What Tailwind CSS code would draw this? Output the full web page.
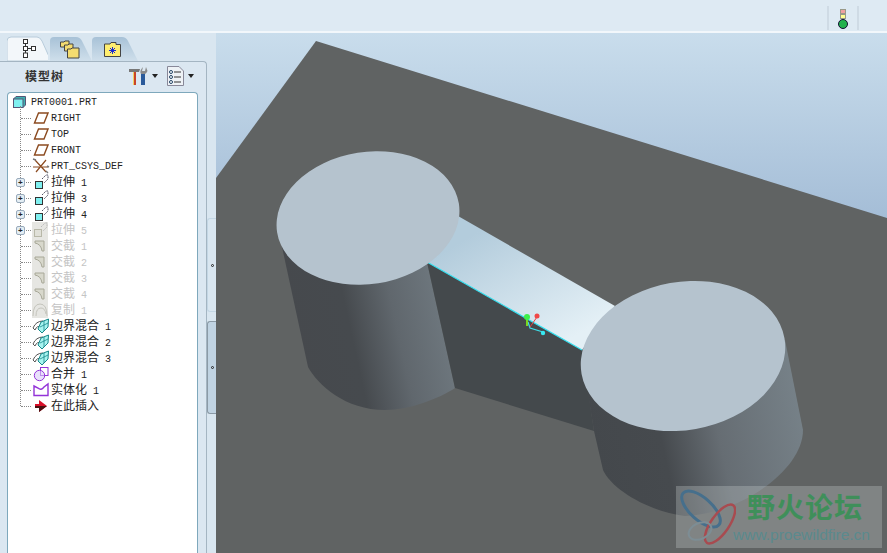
<!DOCTYPE html>
<html lang="zh">
<head>
  <meta charset="UTF-8">
  <title>PRT0001</title>
  <script src="https://cdn.jsdelivr.net/npm/@tailwindcss/browser@4"></script>
</head>
<body class="bg-[#dce8f2]">
  <svg width="0" height="0" class="absolute">
    <defs>
      <linearGradient id="tabfill" x1="0" y1="0" x2="0" y2="1"><stop offset="0" stop-color="#a8c2d7"/><stop offset="1" stop-color="#cfdfeb"/></linearGradient>
      <symbol id="plane" viewBox="0 0 16 16"><path d="M1.5 13 L5.5 3 H15 L11 13 Z" fill="none" stroke="#8c4b20" stroke-width="1.4"/></symbol>
      <symbol id="csys" viewBox="0 0 18 16"><path d="M3 2 L14 14 M14 2 L4 14 M1 9 H16" stroke="#8c4b20" stroke-width="1.2" fill="none"/><path d="M1 1 L4 2 M15 8 L17 9 M14 13 L16 15" stroke="#777" stroke-width="1.4"/></symbol>
      <symbol id="extrude" viewBox="0 0 16 16"><path d="M9 5 L13 1 H15 V5 L11 9" fill="none" stroke="#556" stroke-width="1" stroke-dasharray="2 1"/><rect x="2.5" y="7.5" width="7" height="7" fill="#7ff0f0" stroke="#333"/></symbol>
      <symbol id="extrudeoff" viewBox="0 0 16 16"><path d="M9 5 L13 1 H15 V5 L11 9" fill="none" stroke="#bbb" stroke-width="1" stroke-dasharray="2 1"/><rect x="2.5" y="7.5" width="7" height="7" fill="#e0e0d8" stroke="#b8b8a8"/></symbol>
      <symbol id="trim" viewBox="0 0 16 16"><path d="M3 3 H12 V13 H10 Q9 6 3 5 Z" fill="#d8d8cc" stroke="#a8a898"/></symbol>
      <symbol id="copy" viewBox="0 0 16 16"><path d="M1 14 Q1 2 8 2 Q15 2 15 14" fill="none" stroke="#c4c4bc"/><path d="M4 14 Q4 6 9 6 Q13 6 14 12" fill="none" stroke="#c4c4bc"/></symbol>
      <symbol id="blend" viewBox="0 0 18 16"><path d="M1 10 Q4 3 11 3 L9 9 Q5 7 3 12 Z" fill="#fff" stroke="#555"/><path d="M9 4 L16.5 1 L16 9 L10 15 L6 11 Z" fill="#a8f4f0" stroke="#16888a"/><path d="M12 3 L12 13 M16 5 L8 9" stroke="#16888a" stroke-width=".8"/></symbol>
      <symbol id="merge" viewBox="0 0 16 16"><rect x="7.5" y="1.5" width="7.5" height="8" fill="#fff" stroke="#9333d8"/><circle cx="6.5" cy="9.5" r="5.2" fill="#d8ccf8" fill-opacity=".6" stroke="#9333d8"/></symbol>
      <symbol id="solid" viewBox="0 0 16 16"><path d="M1 4 L5 6 Q8 9 11 5 L15 2 V13.5 H1 Z" fill="#fff" stroke="#9333d8" stroke-width="1.4"/></symbol>
      <symbol id="insert" viewBox="0 0 16 16"><path d="M6 2 L14 8 L6 14 V10 H2 V6 H6 Z" fill="#d8102a"/><path d="M6 14 L14 8 H2 V10 H6 Z" fill="#4a1010"/></symbol>
    </defs>
  </svg>

  <div class="w-[887px] h-[553px] flex flex-col overflow-hidden">
    <!-- top bar -->
    <div class="h-[33px] shrink-0 flex justify-end bg-[#deeaf3] border-b-2 border-[#f2f7fb] shadow-[0_1px_0_#c3d6e5]">
      <div class="mt-[6px] mr-[28px] w-[32px] h-[24px] flex flex-col items-center border-x-2 border-[#cfdbe5]">
        <div class="mt-[3px] w-[6px] h-[5px] bg-[#f0a0a0] border border-[#998]"></div>
        <div class="w-[6px] h-[5px] bg-[#ffff90] border border-[#998]"></div>
        <div class="w-[10px] h-[10px] rounded-full bg-[#22b14c] border border-[#113]"></div>
      </div>
    </div>

    <div class="flex-1 flex min-h-0">
      <!-- left panel -->
      <div class="w-[216px] shrink-0 relative flex flex-col bg-[#d9e6f0] font-['Liberation_Mono','Noto_Sans_CJK_SC',monospace] text-[10px] text-[#222]">
        <!-- tabs -->
        <div class="h-[28px] shrink-0 flex items-end pl-[7px] gap-[2px]">
          <div class="relative w-[41px] h-[25px] flex items-center pl-[16px]">
            <svg class="absolute inset-0" width="41" height="25"><path d="M0 25 V5 Q0 1 4 1 H30 Q33 1 35 5 L44 25 Z" fill="#f3f7fa" stroke="#b8ccdb"/></svg>
            <svg class="relative" width="13" height="19" viewBox="0 0 13 19"><g fill="#fff" stroke="#333"><rect x=".5" y=".5" width="4" height="4"/><rect x=".5" y="7.5" width="4" height="4"/><rect x=".5" y="14" width="4" height="4.5"/><rect x="8.5" y="7.5" width="4" height="4"/></g><path d="M2.5 4.5 V7.5 M2.5 11.5 V14 M4.5 9.5 H8.5" stroke="#333"/></svg>
          </div>
          <div class="relative w-[39px] h-[24px] flex items-center pl-[10px]">
            <svg class="absolute inset-0" width="44" height="24"><path d="M0 24 V4 Q0 0 4 0 H26 Q30 0 32 4 L42 24 Z" fill="url(#tabfill)"/></svg>
            <svg class="relative" width="20" height="19" viewBox="0 0 20 19"><g stroke="#444" fill="#f4dc70"><path d="M.5 7 V2 H4 L5 1 H9 V7 Z"/><path d="M4.5 11 V5 H8 L9 4 H13 V11 Z"/><path d="M7.5 18 V9 H11 L12 8 H19 V18 Z"/></g></svg>
          </div>
          <div class="relative ml-[1px] w-[44px] h-[24px] flex items-center pl-[12px]">
            <svg class="absolute inset-0" width="50" height="24"><path d="M0 24 V4 Q0 0 4 0 H30 Q34 0 36 4 L46 24 Z" fill="url(#tabfill)"/></svg>
            <svg class="relative" width="17" height="15" viewBox="0 0 17 15"><path d="M.5 14.5 V2 H6 L7 .5 H12 V2.5 H16.5 V14.5 Z" fill="#ffee70" stroke="#444"/><path d="M8.5 5 V12 M5 8.5 H12 M6 6 L11 11 M11 6 L6 11" stroke="#1a2ad0"/></svg>
          </div>
        </div>

        <!-- panel body -->
        <div class="flex-1 min-h-0 flex items-stretch">
          <div class="w-[207px] shrink-0 flex flex-col bg-[#dbe7f1] border-t border-r border-[#a4b5c2] rounded-tr-[4px] pl-[7px] pr-[8px]">
            <div class="h-[30px] shrink-0 flex items-center pb-[2px]">
              <span class="ml-[18px] text-[12px] font-bold tracking-[1px] font-['Noto_Sans_CJK_SC',sans-serif] text-[#333] whitespace-nowrap">模型树</span>
              <svg class="ml-[64px] shrink-0" width="20" height="20" viewBox="0 0 20 20"><path d="M1 3 H12 L11 6 H1 Z" fill="#777"/><rect x="5" y="6" width="3" height="13" fill="#c8442a"/><rect x="5" y="6" width="1" height="13" fill="#f0d060"/><path d="M15 1 L14 5 L17 5 L18 1 L19.5 5 Q18 8 17 8 V19 H13 V8 Q11 5 15 1 Z" fill="#8a8a8a"/><rect x="13" y="8" width="4" height="11" fill="#2a5a9a"/></svg>
              <div class="ml-[4px] w-0 h-0 shrink-0 border-x-[3.5px] border-t-[4px] border-x-transparent border-t-[#222]"></div>
              <svg class="ml-[9px] shrink-0" width="17" height="20" viewBox="0 0 17 20"><path d="M.5 .5 H12 L16.5 5 V19.5 H.5 Z" fill="#eef2f6" stroke="#889"/><g stroke="#333"><path d="M7 6 H14 M7 11 H14 M7 16 H14"/></g><g fill="#fff" stroke="#246"><circle cx="4" cy="6" r="1.5"/><circle cx="4" cy="11" r="1.5"/><circle cx="4" cy="16" r="1.5"/></g></svg>
              <div class="ml-[4px] w-0 h-0 shrink-0 border-x-[3.5px] border-t-[4px] border-x-transparent border-t-[#222]"></div>
            </div>

            <!-- model tree -->
            <div class="flex-1 relative bg-white border border-b-0 border-[#7ea8bc] rounded-t-[4px] pt-[1px] overflow-hidden">
              <div class="absolute left-[12px] top-[13px] h-[300px] border-l border-dotted border-[#888]"></div>

              <div class="flex h-4 items-center pl-[5px] gap-[5px]">
                <svg width="13" height="12" viewBox="0 0 13 12"><path d="M3 .5 H12.5 V9 L10 11.5 H.5 V3 Z" fill="#3fb0b0" stroke="#557"/><rect x=".5" y="3" width="9.5" height="8.5" fill="#7ff0f0" stroke="#557"/></svg>
                <span>PRT0001.PRT</span>
              </div>

              <div class="flex h-4 items-center pl-[13px]"><div class="w-[10px] border-t border-dotted border-[#888]"></div><svg class="mx-[2px]" width="16" height="16"><use href="#plane"/></svg><span>RIGHT</span></div>
              <div class="flex h-4 items-center pl-[13px]"><div class="w-[10px] border-t border-dotted border-[#888]"></div><svg class="mx-[2px]" width="16" height="16"><use href="#plane"/></svg><span>TOP</span></div>
              <div class="flex h-4 items-center pl-[13px]"><div class="w-[10px] border-t border-dotted border-[#888]"></div><svg class="mx-[2px]" width="16" height="16"><use href="#plane"/></svg><span>FRONT</span></div>
              <div class="flex h-4 items-center pl-[13px]"><div class="w-[10px] border-t border-dotted border-[#888]"></div><svg class="mx-[1px]" width="18" height="16"><use href="#csys"/></svg><span>PRT_CSYS_DEF</span></div>

              <div class="relative flex h-4 items-center pl-[13px]"><div class="absolute left-[8px] top-[4px] w-[9px] h-[9px] flex items-center justify-center rounded-[2px] bg-[#e4eef4] border border-[#9ab] text-[8px] font-bold leading-none">+</div><div class="w-[10px] border-t border-dotted border-[#888]"></div><svg class="mx-[2px]" width="16" height="16"><use href="#extrude"/></svg><span class="relative top-[1px]"><span class="text-[12px]">拉伸</span> 1</span></div>
              <div class="relative flex h-4 items-center pl-[13px]"><div class="absolute left-[8px] top-[4px] w-[9px] h-[9px] flex items-center justify-center rounded-[2px] bg-[#e4eef4] border border-[#9ab] text-[8px] font-bold leading-none">+</div><div class="w-[10px] border-t border-dotted border-[#888]"></div><svg class="mx-[2px]" width="16" height="16"><use href="#extrude"/></svg><span class="relative top-[1px]"><span class="text-[12px]">拉伸</span> 3</span></div>
              <div class="relative flex h-4 items-center pl-[13px]"><div class="absolute left-[8px] top-[4px] w-[9px] h-[9px] flex items-center justify-center rounded-[2px] bg-[#e4eef4] border border-[#9ab] text-[8px] font-bold leading-none">+</div><div class="w-[10px] border-t border-dotted border-[#888]"></div><svg class="mx-[2px]" width="16" height="16"><use href="#extrude"/></svg><span class="relative top-[1px]"><span class="text-[12px]">拉伸</span> 4</span></div>
              <div class="relative flex h-4 items-center pl-[13px] text-[#c4c4c4]"><div class="absolute left-[8px] top-[4px] w-[9px] h-[9px] flex items-center justify-center rounded-[2px] bg-[#e4eef4] border border-[#9ab] text-[8px] font-bold leading-none text-[#222]">+</div><div class="w-[10px] border-t border-dotted border-[#888]"></div><svg class="ml-[1px] mr-[3px] bg-[#e6e6e2]" width="16" height="16"><use href="#extrudeoff"/></svg><span class="relative top-[1px]"><span class="text-[12px]">拉伸</span> 5</span></div>

              <div class="flex h-4 items-center pl-[13px] text-[#c4c4c4]"><div class="w-[10px] border-t border-dotted border-[#888]"></div><svg class="ml-[1px] mr-[3px] bg-[#e6e6e2]" width="16" height="16"><use href="#trim"/></svg><span class="relative top-[1px]"><span class="text-[12px]">交截</span> 1</span></div>
              <div class="flex h-4 items-center pl-[13px] text-[#c4c4c4]"><div class="w-[10px] border-t border-dotted border-[#888]"></div><svg class="ml-[1px] mr-[3px] bg-[#e6e6e2]" width="16" height="16"><use href="#trim"/></svg><span class="relative top-[1px]"><span class="text-[12px]">交截</span> 2</span></div>
              <div class="flex h-4 items-center pl-[13px] text-[#c4c4c4]"><div class="w-[10px] border-t border-dotted border-[#888]"></div><svg class="ml-[1px] mr-[3px] bg-[#e6e6e2]" width="16" height="16"><use href="#trim"/></svg><span class="relative top-[1px]"><span class="text-[12px]">交截</span> 3</span></div>
              <div class="flex h-4 items-center pl-[13px] text-[#c4c4c4]"><div class="w-[10px] border-t border-dotted border-[#888]"></div><svg class="ml-[1px] mr-[3px] bg-[#e6e6e2]" width="16" height="16"><use href="#trim"/></svg><span class="relative top-[1px]"><span class="text-[12px]">交截</span> 4</span></div>
              <div class="flex h-4 items-center pl-[13px] text-[#c4c4c4]"><div class="w-[10px] border-t border-dotted border-[#888]"></div><svg class="ml-[1px] mr-[3px] bg-[#e6e6e2]" width="16" height="16"><use href="#copy"/></svg><span class="relative top-[1px]"><span class="text-[12px]">复制</span> 1</span></div>

              <div class="flex h-4 items-center pl-[13px]"><div class="w-[10px] border-t border-dotted border-[#888]"></div><svg class="mx-[1px]" width="18" height="16"><use href="#blend"/></svg><span class="relative top-[1px]"><span class="text-[12px]">边界混合</span> 1</span></div>
              <div class="flex h-4 items-center pl-[13px]"><div class="w-[10px] border-t border-dotted border-[#888]"></div><svg class="mx-[1px]" width="18" height="16"><use href="#blend"/></svg><span class="relative top-[1px]"><span class="text-[12px]">边界混合</span> 2</span></div>
              <div class="flex h-4 items-center pl-[13px]"><div class="w-[10px] border-t border-dotted border-[#888]"></div><svg class="mx-[1px]" width="18" height="16"><use href="#blend"/></svg><span class="relative top-[1px]"><span class="text-[12px]">边界混合</span> 3</span></div>
              <div class="flex h-4 items-center pl-[13px]"><div class="w-[10px] border-t border-dotted border-[#888]"></div><svg class="mx-[2px]" width="16" height="16"><use href="#merge"/></svg><span class="relative top-[1px]"><span class="text-[12px]">合并</span> 1</span></div>
              <div class="flex h-4 items-center pl-[13px]"><div class="w-[10px] border-t border-dotted border-[#888]"></div><svg class="mx-[2px]" width="16" height="16"><use href="#solid"/></svg><span class="relative top-[1px]"><span class="text-[12px]">实体化</span> 1</span></div>
              <div class="flex h-4 items-center pl-[13px]"><div class="w-[10px] border-t border-dotted border-[#888]"></div><svg class="mx-[2px]" width="16" height="16"><use href="#insert"/></svg><span class="relative top-[1px] text-[12px]">在此插入</span></div>
            </div>
          </div>

          <!-- sashes -->
          <div class="flex-1 flex flex-col pt-[157px]">
            <div class="h-[94px] flex items-center border border-r-0 border-[#c3d6e4] rounded-l-[3px]"><div class="ml-[3px] w-[3px] h-[3px] rounded-full border border-[#222]"></div></div>
            <div class="mt-[9px] h-[93px] flex items-center bg-[#c0d3e2] border border-r-0 border-[#8b9aa6] rounded-l-[3px]"><div class="ml-[3px] w-[3px] h-[3px] rounded-full border border-[#222]"></div></div>
          </div>
        </div>
      </div>

      <!-- 3d viewport -->
      <div class="flex-1 relative bg-[#b8cde2] overflow-hidden">
        <svg class="block" width="671" height="520" viewBox="216 33 671 520">
          <defs>
            <linearGradient id="sky" gradientUnits="userSpaceOnUse" x1="0" y1="33" x2="0" y2="225"><stop offset="0" stop-color="#c9ddec"/><stop offset="1" stop-color="#a3bcd6"/></linearGradient>
            <linearGradient id="cyl1" gradientUnits="userSpaceOnUse" x1="290" y1="330" x2="455" y2="294"><stop offset="0" stop-color="#46494d"/><stop offset=".35" stop-color="#464a4e"/><stop offset=".62" stop-color="#60676d"/><stop offset="1" stop-color="#727c83"/></linearGradient>
            <linearGradient id="cyl2" gradientUnits="userSpaceOnUse" x1="590" y1="440" x2="803" y2="393"><stop offset="0" stop-color="#44484c"/><stop offset=".32" stop-color="#464a4e"/><stop offset=".58" stop-color="#666d73"/><stop offset="1" stop-color="#778289"/></linearGradient>
            <linearGradient id="web" gradientUnits="userSpaceOnUse" x1="490" y1="225" x2="560" y2="345"><stop offset="0" stop-color="#b3ccdc"/><stop offset="1" stop-color="#e4f0f6"/></linearGradient>
          </defs>
          <rect x="216" y="33" width="671" height="520" fill="url(#sky)"/>
          <polygon points="316,41 887,218 887,553 216,553 216,178" fill="#606363"/>

          <path d="M282 247 L308 367 C318 385 345 410 385 410 C410 410 440 398 455 388 L427 262 Z" fill="url(#cyl1)"/>
          <polygon points="427,262 582,350 594,431 455,388" fill="#44494c"/>
          <path d="M584 370 L594 431 L603 470 C612 490 650 512 685 516 C740 514 803 470 803 430 L785 340 Z" fill="url(#cyl2)"/>
          <polygon points="458,216 427,262 582,350 615,306" fill="url(#web)"/>
          <path d="M427 262 L582 350" stroke="#35e0f0" stroke-width="1.2"/>
          <ellipse cx="368" cy="218" rx="92" ry="66" transform="rotate(-9 368 218)" fill="#b5c3ce"/>
          <ellipse cx="683" cy="356" rx="103" ry="74" transform="rotate(-10 683 356)" fill="#b5c3ce"/>

          <path d="M528 322 L530 328 L543 332" fill="none" stroke="#3de0ea" stroke-width="1.2"/>
          <path d="M527 318 V326" stroke="#7bd820" stroke-width="2"/>
          <path d="M530 327 L537 317" stroke="#e84040"/>
          <circle cx="527" cy="317" r="3" fill="#3cf04a"/>
          <circle cx="537" cy="316" r="2.5" fill="#f04848"/>
          <circle cx="543" cy="333" r="2.2" fill="#38e8f0"/>
        </svg>

        <!-- forum watermark -->
        <div class="absolute left-[460px] top-[453px] w-[206px] h-[62px] bg-[#c9d2d2]/30 flex">
          <svg class="shrink-0 mt-[3px]" width="60" height="60" viewBox="0 0 60 60" fill="none">
            <ellipse cx="25" cy="20" rx="24" ry="11" transform="rotate(42 25 20)" stroke="#466f8c" stroke-width="3"/>
            <ellipse cx="44" cy="35" rx="9" ry="23" transform="rotate(35 44 35)" stroke="#a84b50" stroke-width="2.5"/>
            <ellipse cx="24" cy="42" rx="12" ry="8" transform="rotate(-25 24 42)" stroke="#7d8d94" stroke-width="2"/>
          </svg>
          <div class="flex flex-col items-start">
            <span class="mt-[3px] ml-[11px] text-[28px] leading-[34px] font-bold tracking-[1px] text-[#3f8f5a] font-['Noto_Sans_CJK_SC',sans-serif] whitespace-nowrap">野火论坛</span>
            <span class="mt-[2px] ml-[-3px] text-[15.5px] leading-[20px] text-[#5a8a8e] font-['Liberation_Sans',sans-serif] whitespace-nowrap">www.proewildfire.cn</span>
          </div>
        </div>
      </div>
    </div>
  </div>
</body>
</html>
